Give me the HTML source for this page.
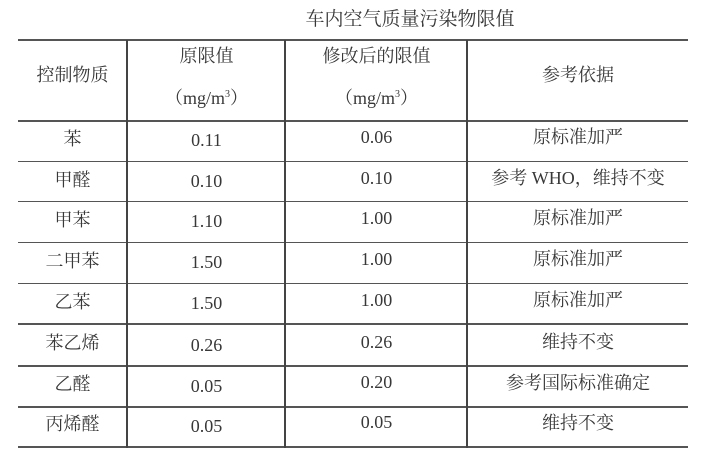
<!DOCTYPE html>
<html><head><meta charset="utf-8"><style>
html,body{margin:0;padding:0;background:#fff;}
body{width:720px;height:468px;position:relative;overflow:hidden;font-family:"Liberation Serif","Noto Serif CJK SC","Noto Sans CJK SC",serif;color:#383838;}
.h{position:absolute;left:18px;width:670px;height:2px;background:#555;}
.v{position:absolute;top:40px;height:408px;width:2px;background:#444;}
.t{position:absolute;text-align:center;font-size:18px;line-height:22px;white-space:nowrap;}
.c0{left:18px;width:109px}.c1{left:128px;width:157px}.c2{left:286px;width:181px}.c3{left:468px;width:220px}
</style></head><body>
<div class="t" style="left:290px;width:240px;top:9px;font-size:19px;">车内空气质量污染物限值</div>
<div class="h" style="top:39px"></div>
<div class="h" style="top:120px"></div>
<div class="h" style="top:161px;height:1px"></div>
<div class="h" style="top:201px;height:1px"></div>
<div class="h" style="top:242px;height:1px"></div>
<div class="h" style="top:283px;height:1px"></div>
<div class="h" style="top:323px"></div>
<div class="h" style="top:365px"></div>
<div class="h" style="top:406px"></div>
<div class="h" style="top:446px"></div>
<div class="v" style="left:126px"></div>
<div class="v" style="left:284px"></div>
<div class="v" style="left:466px"></div>

<div class="t c0" style="top:64px">控制物质</div>
<div class="t c1" style="top:45px">原限值</div>
<div class="t c1" style="top:84px">（mg/m<sup style="font-size:10px">3</sup>）</div>
<div class="t c2" style="top:45px">修改后的限值</div>
<div class="t c2" style="top:84px">（mg/m<sup style="font-size:10px">3</sup>）</div>
<div class="t c3" style="top:64px">参考依据</div>

<div class="t c0" style="top:128px">苯</div><div class="t c1" style="top:129px">0.11</div><div class="t c2" style="top:126px">0.06</div><div class="t c3" style="top:126px">原标准加严</div>
<div class="t c0" style="top:169px">甲醛</div><div class="t c1" style="top:170px">0.10</div><div class="t c2" style="top:167px">0.10</div><div class="t c3" style="top:167px">参考 WHO，维持不变</div>
<div class="t c0" style="top:209px">甲苯</div><div class="t c1" style="top:210px">1.10</div><div class="t c2" style="top:207px">1.00</div><div class="t c3" style="top:207px">原标准加严</div>
<div class="t c0" style="top:250px">二甲苯</div><div class="t c1" style="top:251px">1.50</div><div class="t c2" style="top:248px">1.00</div><div class="t c3" style="top:248px">原标准加严</div>
<div class="t c0" style="top:291px">乙苯</div><div class="t c1" style="top:292px">1.50</div><div class="t c2" style="top:289px">1.00</div><div class="t c3" style="top:289px">原标准加严</div>
<div class="t c0" style="top:332px">苯乙烯</div><div class="t c1" style="top:334px">0.26</div><div class="t c2" style="top:331px">0.26</div><div class="t c3" style="top:331px">维持不变</div>
<div class="t c0" style="top:373px">乙醛</div><div class="t c1" style="top:375px">0.05</div><div class="t c2" style="top:371px">0.20</div><div class="t c3" style="top:372px">参考国际标准确定</div>
<div class="t c0" style="top:413px">丙烯醛</div><div class="t c1" style="top:415px">0.05</div><div class="t c2" style="top:411px">0.05</div><div class="t c3" style="top:412px">维持不变</div>
</body></html>
